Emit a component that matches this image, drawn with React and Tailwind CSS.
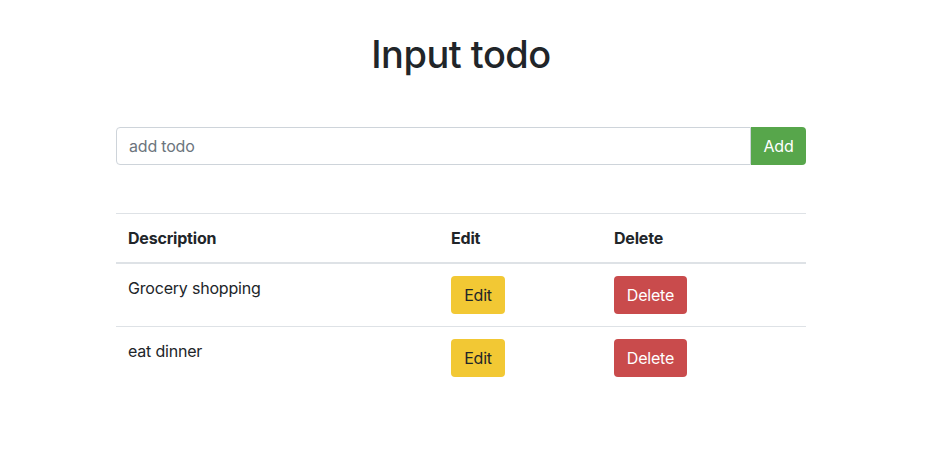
export default function App() {
  const rows = ["Grocery shopping", "eat dinner"];
  return (
    <div className="min-h-[449px] bg-white text-[#212529]" style={{ fontFamily: 'Inter, "Noto Sans", sans-serif' }}>
      <div className="ml-[116px] w-[690px] pt-[30px]">
        <h1 className="text-center text-[38px] font-medium leading-[48px] tracking-[-0.5px]">Input todo</h1>
        <form className="mt-[49px] flex" onSubmit={(e) => e.preventDefault()}>
          <input
            type="text"
            placeholder="add todo"
            className="h-[38px] flex-1 rounded-l-[4px] border border-[#ced4da] px-3 text-[16px] tracking-[-0.2px] text-[#495057] placeholder-[#6c757d] outline-none"
          />
          <button className="h-[38px] w-[55px] rounded-r-[4px] bg-[#57a64b] text-[16px] tracking-[-0.2px] text-white">Add</button>
        </form>
        <table className="mt-[48px] w-full border-collapse text-[16px] leading-[24px] tracking-[-0.2px]">
          <thead>
            <tr className="border-t border-[#dee2e6]">
              <th className="w-[323px] border-b-2 border-[#dee2e6] p-3 text-left font-bold">Description</th>
              <th className="w-[163px] border-b-2 border-[#dee2e6] p-3 text-left font-bold">Edit</th>
              <th className="border-b-2 border-[#dee2e6] p-3 text-left font-bold">Delete</th>
            </tr>
          </thead>
          <tbody>
            {rows.map((r, i) => (
              <tr key={r} className={i > 0 ? "border-t border-[#dee2e6]" : ""}>
                <td className="p-3 align-top">{r}</td>
                <td className="p-3 align-top">
                  <button className="h-[38px] w-[54px] rounded-[4px] bg-[#f2c834] text-[16px] text-[#212529]">Edit</button>
                </td>
                <td className="p-3 align-top">
                  <button className="h-[38px] w-[73px] rounded-[4px] bg-[#c94b4c] text-[16px] text-white">Delete</button>
                </td>
              </tr>
            ))}
          </tbody>
        </table>
      </div>
    </div>
  );
}
